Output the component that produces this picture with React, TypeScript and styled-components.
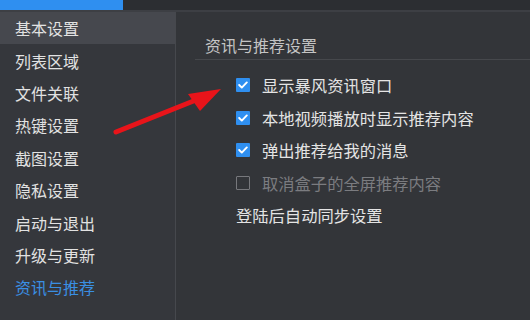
import React from 'react'
import styled, { createGlobalStyle } from 'styled-components'

const GlobalStyle = createGlobalStyle`
    html, body {
        margin: 0;
        padding: 0;
        background: #34363b;
        font-family: "Noto Sans CJK SC", "Noto Sans", sans-serif;
    }
`;

const Page = styled.div`
    width: 530px;
    height: 320px;
    display: flex;
    flex-direction: column;
    overflow: hidden;
    position: relative;
`;

const TopStrip = styled.div`
    height: 10px;
    display: flex;
    background: #2c2e32;
    border-bottom: 2px solid #3d3f44;
`;

const TabAccent = styled.div`
    width: 123px;
    background: #2f8ff0;
`;

const Body = styled.div`
    flex: 1;
    display: flex;
`;

const Sidebar = styled.div`
    width: 175px;
    display: flex;
    flex-direction: column;
    background: #35373c;
    border-right: 1px solid #46484d;
`;

const NavItem = styled.div<{ $selected?: boolean; $active?: boolean }>`
    height: 32.4px;
    display: flex;
    align-items: center;
    padding-left: 15px;
    font-size: 16px;
    color: ${p => (p.$active ? '#3a8fe3' : '#e2e2e2')};
    background: ${p => (p.$selected ? '#46484e' : 'transparent')};
`;

const Content = styled.div`
    flex: 1;
    padding: 22px 0 0 19px;
    background: #333539;
`;

const SectionTitle = styled.div`
    font-size: 16px;
    color: #c4c4c4;
    padding: 0 0 3px 10px;
    line-height: 22px;
    border-bottom: 1px solid #46484c;
`;

const Options = styled.div`
    display: flex;
    flex-direction: column;
    padding: 9px 0 0 41px;
`;

const Row = styled.div<{ $disabled?: boolean }>`
    height: 32.5px;
    display: flex;
    align-items: center;
    gap: 12px;
    font-size: 16.3px;
    color: ${p => (p.$disabled ? '#7b7c80' : '#e4e4e4')};
`;

const Box = styled.span<{ $checked?: boolean }>`
    width: 14px;
    height: 14px;
    box-sizing: border-box;
    display: flex;
    align-items: center;
    justify-content: center;
    border-radius: 1px;
    background: ${p => (p.$checked ? '#2f8ff0' : 'transparent')};
    border: ${p => (p.$checked ? 'none' : '1px solid #77787c')};
`;

const Arrow = styled.svg`
    position: absolute;
    left: 0;
    top: 0;
    pointer-events: none;
`;

const navItems = ['基本设置', '列表区域', '文件关联', '热键设置', '截图设置', '隐私设置', '启动与退出', '升级与更新', '资讯与推荐'];

const options = [
    { label: '显示暴风资讯窗口', checked: true },
    { label: '本地视频播放时显示推荐内容', checked: true },
    { label: '弹出推荐给我的消息', checked: true },
    { label: '取消盒子的全屏推荐内容', checked: false, disabled: true },
];

const Check = () => (
    <svg width="10" height="8" viewBox="0 0 10 8">
        <path d="M1.2 4 L3.8 6.6 L8.8 1.4" stroke="#fff" strokeWidth="1.9" fill="none" strokeLinecap="round" strokeLinejoin="round" />
    </svg>
);

const App: React.FC = () => {
    return (
        <Page>
            <GlobalStyle />
            <TopStrip>
                <TabAccent />
            </TopStrip>
            <Body>
                <Sidebar>
                    {navItems.map((item, i) => (
                        <NavItem key={item} $selected={i === 0} $active={i === navItems.length - 1}>
                            {item}
                        </NavItem>
                    ))}
                </Sidebar>
                <Content>
                    <SectionTitle>资讯与推荐设置</SectionTitle>
                    <Options>
                        {options.map(o => (
                            <Row key={o.label} $disabled={o.disabled}>
                                <Box $checked={o.checked}>{o.checked && <Check />}</Box>
                                {o.label}
                            </Row>
                        ))}
                        <Row>登陆后自动同步设置</Row>
                    </Options>
                </Content>
            </Body>
            <Arrow width="530" height="320" viewBox="0 0 530 320">
                <line x1="116" y1="132" x2="196" y2="100" stroke="#e8141a" strokeWidth="5" strokeLinecap="round" />
                <polygon points="221,89 188,94 200,111" fill="#e8141a" />
            </Arrow>
        </Page>
    );
};

export default App;
